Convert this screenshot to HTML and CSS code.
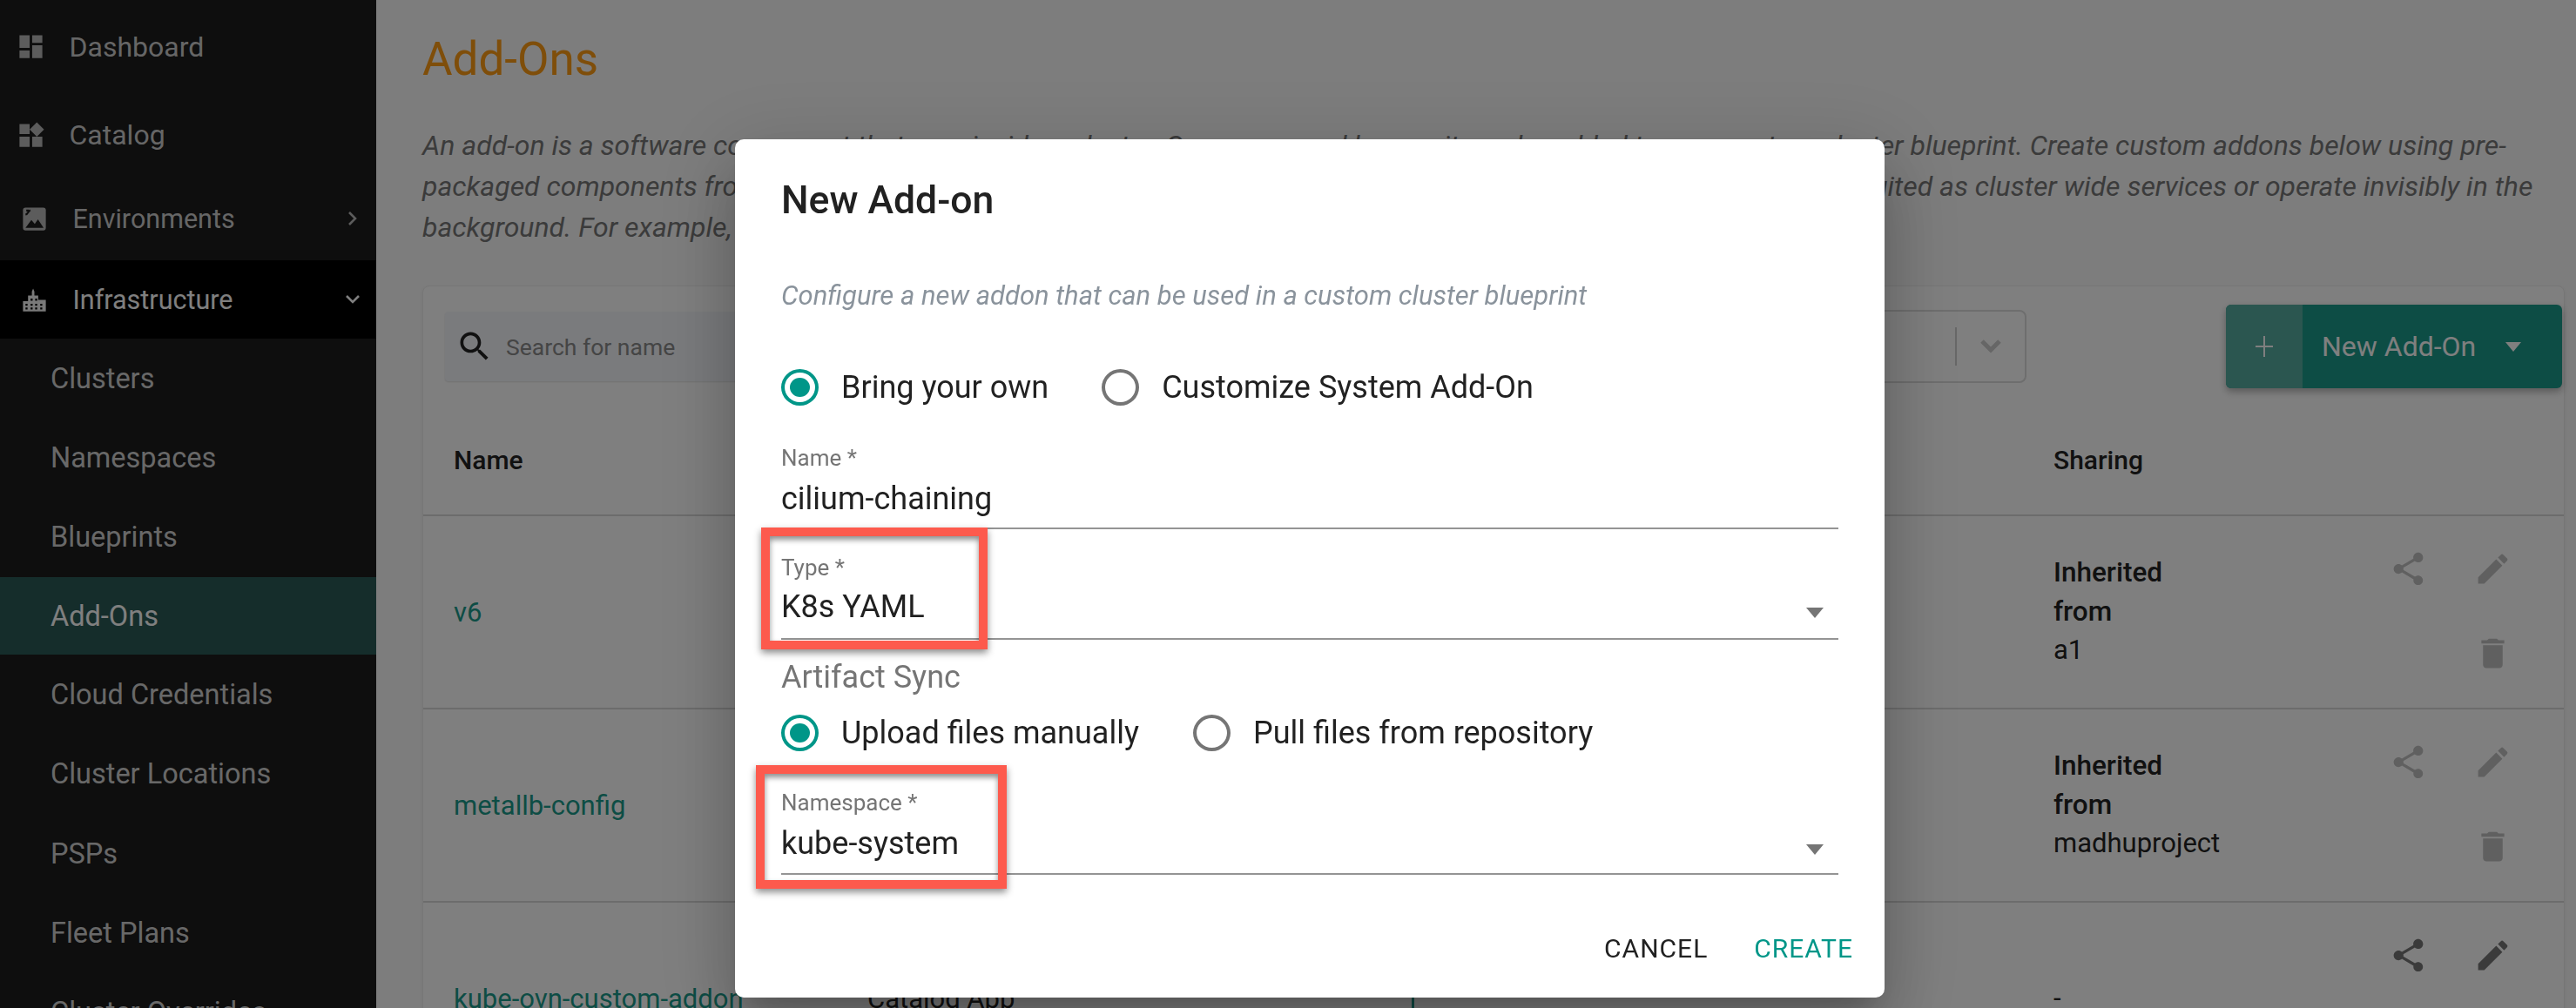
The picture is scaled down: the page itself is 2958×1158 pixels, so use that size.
FILE: index.html
```html
<!DOCTYPE html>
<html lang="en">
<head>
<meta charset="utf-8">
<title>Add-Ons</title>
<link rel="stylesheet" href="styles.css">
</head>
<body>
<div class="app">
  <nav class="sidebar">
    <a class="nav-item nav-first">
      <svg class="nav-icon" viewBox="0 0 24 24"><path d="M3 13h8V3H3v10zm0 8h8v-6H3v6zm10 0h8V11h-8v10zm0-18v6h8V3h-8z"/></svg>
      <span>Dashboard</span>
    </a>
    <a class="nav-item nav-second">
      <svg class="nav-icon" viewBox="0 0 24 24"><path d="M13 13v8h8v-8h-8zM3 21h8v-8H3v8zM3 3v8h8V3H3zm13.66-1.31L11 7.34 16.66 13l5.66-5.66-5.66-5.65z"/></svg>
      <span>Catalog</span>
    </a>
    <a class="nav-item nav-group">
      <svg class="nav-icon" viewBox="0 0 24 24"><path d="M5 3h14a2 2 0 0 1 2 2v14a2 2 0 0 1-2 2H5a2 2 0 0 1-2-2V5a2 2 0 0 1 2-2z"/><path class="nav-cut" d="M5 19l4.6-6.2 2.7 3.1 2.5-3.6 4.4 6.7z"/><path class="nav-cut-line" d="M5 8.6c2.4-.4 1.6-2.4 3.8-3.6M5.6 5.4h2"/></svg>
      <span>Environments</span>
      <svg class="nav-chevron" viewBox="0 0 12 18"><path d="M2 2l7 7-7 7"/></svg>
    </a>
    <a class="nav-item nav-group nav-open">
      <svg class="nav-icon" viewBox="0 0 24 24"><path fill-rule="evenodd" d="M3 21v-8h4V8.5h3V5.5L11 3l1 2.5v3h3V12h6v9zM5 15h1.6v1.6H5zm0 3h1.6v1.6H5zm4-7h1.6v1.6H9zm0 4h1.6v1.6H9zm0 3h1.6v1.6H9zm3.6-7h1.6v1.6h-1.6zm0 4h1.6v1.6h-1.6zm0 3h1.6v1.6h-1.6zm4-3h1.6v1.6h-1.6zm0 3h1.6v1.6h-1.6z"/></svg>
      <span>Infrastructure</span>
      <svg class="nav-chevron nav-chevron-down" viewBox="0 0 18 12"><path d="M2 2l7 7 7-7"/></svg>
    </a>
    <a class="nav-sub">Clusters</a>
    <a class="nav-sub">Namespaces</a>
    <a class="nav-sub">Blueprints</a>
    <a class="nav-sub nav-active">Add-Ons</a>
    <a class="nav-sub">Cloud Credentials</a>
    <a class="nav-sub">Cluster Locations</a>
    <a class="nav-sub">PSPs</a>
    <a class="nav-sub">Fleet Plans</a>
    <a class="nav-sub">Cluster Overrides</a>
  </nav>

  <main class="main">
    <h1 class="page-title">Add-Ons</h1>
    <p class="page-desc">An add-on is a software component that runs inside a cluster. Once managed by you, it can be added to your custom cluster blueprint. Create custom addons below using pre-packaged components from the catalog or by bringing your own helm charts or manifests. Add-ons are particularly well suited as cluster wide services or operate invisibly in the background. For example, add-ons can provide logging.</p>

    <section class="card">
      <div class="toolbar">
        <div class="search">
          <svg class="search-icon" viewBox="0 0 24 24"><path d="M15.5 14h-.79l-.28-.27C15.41 12.59 16 11.11 16 9.5 16 5.91 13.09 3 9.5 3S3 5.91 3 9.5 5.91 16 9.5 16c1.61 0 3.09-.59 4.23-1.57l.27.28v.79l5 4.99L20.49 19l-4.99-5zm-6 0C7.01 14 5 11.99 5 9.5S7.01 5 9.5 5 14 7.01 14 9.5 11.99 14 9.5 14z"/></svg>
          <span>Search for name</span>
        </div>
        <div class="filter">
          <span class="filter-sep"></span>
          <svg class="filter-chevron" viewBox="0 0 26 18"><path d="M3 3l10 10L23 3"/></svg>
        </div>
        <button class="new-btn">
          <span class="new-plus"><svg viewBox="0 0 20 26"><path d="M10 1v24M0 13h20"/></svg></span>
          <span class="new-label">New Add-On</span>
          <span class="new-caret"></span>
        </button>
      </div>

      <div class="table-row table-head">
        <span>Name</span><span></span><span></span><span></span><span>Sharing</span><span></span>
      </div>

      <div class="table-row">
        <a class="cell-link">v6</a><span></span><span></span><span></span>
        <div class="sharing"><b>Inherited from</b><br>a1</div>
        <div class="actions actions-off">
          <svg viewBox="0 0 24 24"><path d="M18 16.08c-.76 0-1.44.3-1.96.77L8.91 12.7c.05-.23.09-.46.09-.7s-.04-.47-.09-.7l7.05-4.11c.54.5 1.25.81 2.04.81 1.66 0 3-1.34 3-3s-1.34-3-3-3-3 1.34-3 3c0 .24.04.47.09.7L8.04 9.81C7.5 9.31 6.79 9 6 9c-1.66 0-3 1.34-3 3s1.34 3 3 3c.79 0 1.5-.31 2.04-.81l7.12 4.16c-.05.21-.08.43-.08.65 0 1.61 1.31 2.92 2.92 2.92 1.61 0 2.92-1.31 2.92-2.92s-1.31-2.92-2.92-2.92z"/></svg>
          <svg viewBox="0 0 24 24"><path d="M3 17.25V21h3.75L17.81 9.94l-3.75-3.75L3 17.25zM20.71 7.04c.39-.39.39-1.02 0-1.41l-2.34-2.34c-.39-.39-1.02-.39-1.41 0l-1.83 1.83 3.75 3.75 1.83-1.83z"/></svg>
          <svg class="action-trash" viewBox="0 0 24 24"><path d="M6 19c0 1.1.9 2 2 2h8c1.1 0 2-.9 2-2V7H6v12zM19 4h-3.5l-1-1h-5l-1 1H5v2h14V4z"/></svg>
        </div>
      </div>

      <div class="table-row">
        <a class="cell-link">metallb-config</a><span></span><span></span><span></span>
        <div class="sharing"><b>Inherited from</b><br>madhuproject</div>
        <div class="actions actions-off">
          <svg viewBox="0 0 24 24"><path d="M18 16.08c-.76 0-1.44.3-1.96.77L8.91 12.7c.05-.23.09-.46.09-.7s-.04-.47-.09-.7l7.05-4.11c.54.5 1.25.81 2.04.81 1.66 0 3-1.34 3-3s-1.34-3-3-3-3 1.34-3 3c0 .24.04.47.09.7L8.04 9.81C7.5 9.31 6.79 9 6 9c-1.66 0-3 1.34-3 3s1.34 3 3 3c.79 0 1.5-.31 2.04-.81l7.12 4.16c-.05.21-.08.43-.08.65 0 1.61 1.31 2.92 2.92 2.92 1.61 0 2.92-1.31 2.92-2.92s-1.31-2.92-2.92-2.92z"/></svg>
          <svg viewBox="0 0 24 24"><path d="M3 17.25V21h3.75L17.81 9.94l-3.75-3.75L3 17.25zM20.71 7.04c.39-.39.39-1.02 0-1.41l-2.34-2.34c-.39-.39-1.02-.39-1.41 0l-1.83 1.83 3.75 3.75 1.83-1.83z"/></svg>
          <svg class="action-trash" viewBox="0 0 24 24"><path d="M6 19c0 1.1.9 2 2 2h8c1.1 0 2-.9 2-2V7H6v12zM19 4h-3.5l-1-1h-5l-1 1H5v2h14V4z"/></svg>
        </div>
      </div>

      <div class="table-row">
        <a class="cell-link">kube-ovn-custom-addon</a>
        <span class="cell-text">Catalog App</span>
        <span class="cell-status"></span>
        <span class="cell-date">OUT 5 02</span>
        <div class="sharing">-</div>
        <div class="actions">
          <svg viewBox="0 0 24 24"><path d="M18 16.08c-.76 0-1.44.3-1.96.77L8.91 12.7c.05-.23.09-.46.09-.7s-.04-.47-.09-.7l7.05-4.11c.54.5 1.25.81 2.04.81 1.66 0 3-1.34 3-3s-1.34-3-3-3-3 1.34-3 3c0 .24.04.47.09.7L8.04 9.81C7.5 9.31 6.79 9 6 9c-1.66 0-3 1.34-3 3s1.34 3 3 3c.79 0 1.5-.31 2.04-.81l7.12 4.16c-.05.21-.08.43-.08.65 0 1.61 1.31 2.92 2.92 2.92 1.61 0 2.92-1.31 2.92-2.92s-1.31-2.92-2.92-2.92z"/></svg>
          <svg viewBox="0 0 24 24"><path d="M3 17.25V21h3.75L17.81 9.94l-3.75-3.75L3 17.25zM20.71 7.04c.39-.39.39-1.02 0-1.41l-2.34-2.34c-.39-.39-1.02-.39-1.41 0l-1.83 1.83 3.75 3.75 1.83-1.83z"/></svg>
        </div>
      </div>
    </section>
  </main>
</div>

<div class="backdrop">
  <div class="dialog">
    <h2 class="dialog-title">New Add-on</h2>
    <p class="dialog-sub">Configure a new addon that can be used in a custom cluster blueprint</p>

    <div class="radios radios-source">
      <label class="radio"><span class="radio-mark radio-on"></span>Bring your own</label>
      <label class="radio"><span class="radio-mark"></span>Customize System Add-On</label>
    </div>

    <div class="field field-name">
      <div class="field-label">Name *</div>
      <div class="field-value">cilium-chaining</div>
    </div>

    <div class="field field-type">
      <div class="field-label">Type *</div>
      <div class="field-value">K8s YAML<span class="select-caret"></span></div>
    </div>

    <div class="section-label">Artifact Sync</div>
    <div class="radios radios-sync">
      <label class="radio"><span class="radio-mark radio-on"></span>Upload files manually</label>
      <label class="radio"><span class="radio-mark"></span>Pull files from repository</label>
    </div>

    <div class="field field-ns">
      <div class="field-label">Namespace *</div>
      <div class="field-value">kube-system<span class="select-caret"></span></div>
    </div>

    <div class="dialog-actions">
      <button class="text-btn">Cancel</button>
      <button class="text-btn text-btn-primary">Create</button>
    </div>

    <div class="callout callout-type"></div>
    <div class="callout callout-ns"></div>
  </div>
</div>
</body>
</html>
```

FILE: styles.css
```css
* { box-sizing: border-box; }
html, body { margin: 0; height: 100%; overflow: hidden; }
body { font-family: Roboto, "Liberation Sans", sans-serif; background: #fafafa; color: #222; }

.app { display: flex; height: 1158px; overflow: hidden; }

/* Sidebar */
.sidebar { width: 432px; flex: none; background: #1c1c1c; color: #ccc; font-size: 32px; overflow: hidden; }
.nav-item { display: flex; align-items: center; padding-left: 18px; height: 96px; }
.nav-first { height: 107px; }
.nav-second { height: 96px; }
.nav-group { padding-left: 22px; font-size: 30.5px; }
.nav-icon { width: 35px; height: 35px; flex: none; margin-right: 26.5px; fill: #b8b8b8; }
.nav-cut { fill: #1c1c1c; }
.nav-cut-line { fill: none; stroke: #1c1c1c; stroke-width: 1.4; }
.nav-chevron { width: 12px; height: 18px; margin-left: auto; margin-right: 21px; fill: none; stroke: #b8b8b8; stroke-width: 2.6; }
.nav-chevron-down { width: 18px; height: 12px; margin-right: 18px; }
.nav-open { background: #000; height: 90px; color: #fff; }
.nav-open .nav-icon { fill: #fff; opacity: .95; }
.nav-open .nav-chevron { stroke: #fff; }
.nav-sub { display: flex; align-items: center; height: 91.4px; padding-left: 58px; color: #d0d0d0; font-size: 32.5px; }
.nav-active { background: #2a5a56; height: 89px; color: #fff; }

/* Main */
.main { flex: 1; min-width: 0; padding: 0 13px 0 53px; }
.page-title { margin: 0; padding-top: 38px; font-size: 53px; line-height: 60px; font-weight: 400; color: #ff9c14; }
.page-desc { margin: 46px 0 0; font-size: 32px; line-height: 47px; font-style: italic; color: #777; width: 2425px; }

.card { margin-top: 43px; background: #fff; border: 1px solid #ededed; border-radius: 8px; box-shadow: 0 2px 4px rgba(0,0,0,.06); }
.toolbar { display: flex; align-items: center; padding: 21px 2px 0 25px; }
.search { display: flex; align-items: center; width: 720px; height: 80px; padding-left: 12px; background: #f4f6fb; border-radius: 4px; box-shadow: 0 1px 2px rgba(0,0,0,.12); color: #8a8a8a; font-size: 26.5px; }
.search-icon { width: 44px; height: 44px; margin-right: 14px; fill: #222; }
.filter { display: flex; align-items: center; justify-content: flex-end; width: 700px; height: 84px; margin-left: auto; padding-right: 26px; border: 2px solid #dcdcdc; border-radius: 8px; }
.filter-sep { width: 2px; height: 44px; background: #d0d0d0; margin-right: 26px; }
.filter-chevron { width: 26px; height: 18px; fill: none; stroke: #ccc; stroke-width: 5; }
.new-btn { display: flex; align-items: center; width: 386px; height: 96px; margin-left: 229px; padding: 0; border: 0; border-radius: 6px; background: #1a9a8a; color: #fff; font: 400 32px Roboto, sans-serif; box-shadow: 0 4px 8px rgba(0,0,0,.3); overflow: hidden; }
.new-plus { display: flex; align-items: center; justify-content: center; width: 88px; height: 100%; background: #56aca0; }
.new-plus svg { width: 20px; height: 26px; fill: none; stroke: #fff; stroke-width: 2; }
.new-label { margin-left: 22px; }
.new-caret { margin-left: 34px; border-style: solid; border-width: 11px 9px 0; border-color: #fff transparent transparent; }

.table-row { display: grid; grid-template-columns: 475px 625px 189px 548px 385px 1fr; align-items: center; height: 222px; padding-left: 35px; border-bottom: 2px solid #d8d8d8; font-size: 31px; }
.table-head { height: 147px; padding-top: 20px; font-weight: 500; font-size: 30px; color: #222; }
.cell-link { color: #1a9a8a; white-space: nowrap; }
.cell-text { color: #222; white-space: nowrap; }
.cell-status { align-self: stretch; width: 3px; background: #1a9a8a; }
.cell-date { align-self: center; margin-top: 56px; font-weight: 500; color: #222; white-space: nowrap; }
.sharing { width: 195px; line-height: 44.5px; font-size: 31px; color: #222; }
.sharing b { font-weight: 500; font-size: 31.5px; }
.actions { display: grid; grid-template-columns: 45px 45px; gap: 52px; align-self: start; margin-top: 38px; fill: #777; }
.actions svg { width: 45px; height: 45px; display: block; }
.actions-off { fill: #c0c0c0; }
.action-trash { grid-column: 2; }

/* Dialog */
.backdrop { position: fixed; inset: 0; background: rgba(0,0,0,.5); display: flex; align-items: flex-start; padding: 160px 0 0 844px; }
.dialog { position: relative; width: 1320px; height: 986px; padding: 40px 53px 0; background: #fff; border-radius: 10px; box-shadow: 0 22px 30px -14px rgba(0,0,0,.2), 0 48px 76px 6px rgba(0,0,0,.14), 0 18px 92px 16px rgba(0,0,0,.12); }
.dialog-title { margin: 0; font-size: 44.5px; line-height: 60px; font-weight: 500; color: #212121; }
.dialog-sub { margin: 60px 0 0; font-size: 31px; line-height: 40px; font-style: italic; color: #8a939c; }
.radios { display: flex; height: 48px; align-items: center; font-size: 36px; color: #212121; gap: 62px; }
.radios-source { margin-top: 61px; gap: 61px; }
.radios-sync { margin-top: 20px; }
.radio { display: flex; align-items: center; gap: 26px; }
.radio-mark { position: relative; width: 43px; height: 42px; border: 4px solid #757575; border-radius: 50%; flex: none; }
.radio-on { border-color: #009688; }
.radio-on::after { content: ""; position: absolute; inset: 6px; border-radius: 50%; background: #009688; }
.field { border-bottom: 2px solid #949494; }
.field-label { font-size: 26px; line-height: 30px; color: #757575; }
.field-value { display: flex; justify-content: space-between; font-size: 36px; line-height: 44px; color: #212121; }
.field-name { margin-top: 42px; }
.field-name .field-label { margin-bottom: 10px; }
.field-name .field-value { margin-bottom: 11px; }
.field-type { margin-top: 29px; }
.field-type .field-label { margin-bottom: 8px; }
.field-type .field-value { margin-bottom: 14px; }
.field-ns { margin-top: 41px; }
.field-ns .field-label { margin-bottom: 10px; }
.field-ns .field-value { margin-bottom: 12px; }
.select-caret { align-self: center; margin: 14px 17px 0 0; border-style: solid; border-width: 12px 10px 0; border-color: #757575 transparent transparent; }
.section-label { margin-top: 23px; font-size: 36px; line-height: 40px; color: #757575; }
.dialog-actions { display: flex; justify-content: flex-end; gap: 53px; margin: 65px -17px 0 0; }
.text-btn { padding: 0; border: 0; background: none; font: 400 30px/40px Roboto, sans-serif; text-transform: uppercase; letter-spacing: 1px; color: #212121; }
.text-btn-primary { color: #009688; }

/* Annotation boxes drawn on the screenshot */
.callout { position: absolute; border: 10px solid #fd5a4d; box-shadow: 0 4px 8px rgba(0,0,0,.45), inset 0 4px 6px rgba(0,0,0,.45); }
.callout-type { left: 30px; top: 446px; width: 260px; height: 140px; }
.callout-ns { left: 24px; top: 719px; width: 288px; height: 142px; }
```
